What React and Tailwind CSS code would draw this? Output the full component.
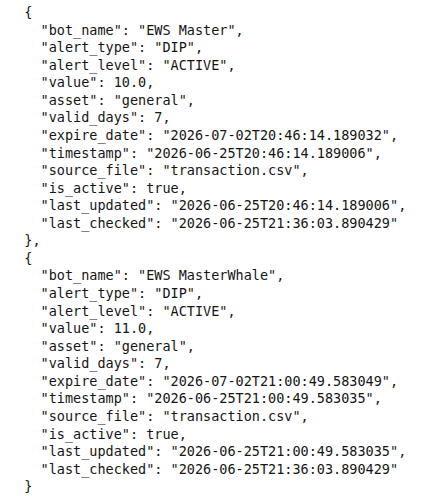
const records = [
  {
    bot_name: '"EWS Master"',
    alert_type: '"DIP"',
    alert_level: '"ACTIVE"',
    value: "10.0",
    asset: '"general"',
    valid_days: "7",
    expire_date: '"2026-07-02T20:46:14.189032"',
    timestamp: '"2026-06-25T20:46:14.189006"',
    source_file: '"transaction.csv"',
    is_active: "true",
    last_updated: '"2026-06-25T20:46:14.189006"',
    last_checked: '"2026-06-25T21:36:03.890429"',
  },
  {
    bot_name: '"EWS MasterWhale"',
    alert_type: '"DIP"',
    alert_level: '"ACTIVE"',
    value: "11.0",
    asset: '"general"',
    valid_days: "7",
    expire_date: '"2026-07-02T21:00:49.583049"',
    timestamp: '"2026-06-25T21:00:49.583035"',
    source_file: '"transaction.csv"',
    is_active: "true",
    last_updated: '"2026-06-25T21:00:49.583035"',
    last_checked: '"2026-06-25T21:36:03.890429"',
  },
];

function buildLines() {
  const lines = [];
  records.forEach((rec, i) => {
    lines.push("  {");
    const keys = Object.keys(rec);
    keys.forEach((k, j) => {
      const comma = j < keys.length - 1 ? "," : "";
      lines.push(`    "${k}": ${rec[k]}${comma}`);
    });
    lines.push(i < records.length - 1 ? "  }," : "  }");
  });
  return lines;
}

export default function App() {
  const lines = buildLines();
  return (
    <div className="w-[442px] h-[496px] bg-white overflow-hidden flex flex-col">
      <pre className="flex-1 pl-[8px] pt-[4px] m-0 text-[13.5px] leading-[17.57px] text-[#151515] font-['DejaVu_Sans_Mono','Liberation_Mono',monospace]">
        {lines.join("\n")}
      </pre>
      {/* bottom edge of the captured window */}
      <div className="h-[3px] bg-[#dcdcdc]" />
    </div>
  );
}
